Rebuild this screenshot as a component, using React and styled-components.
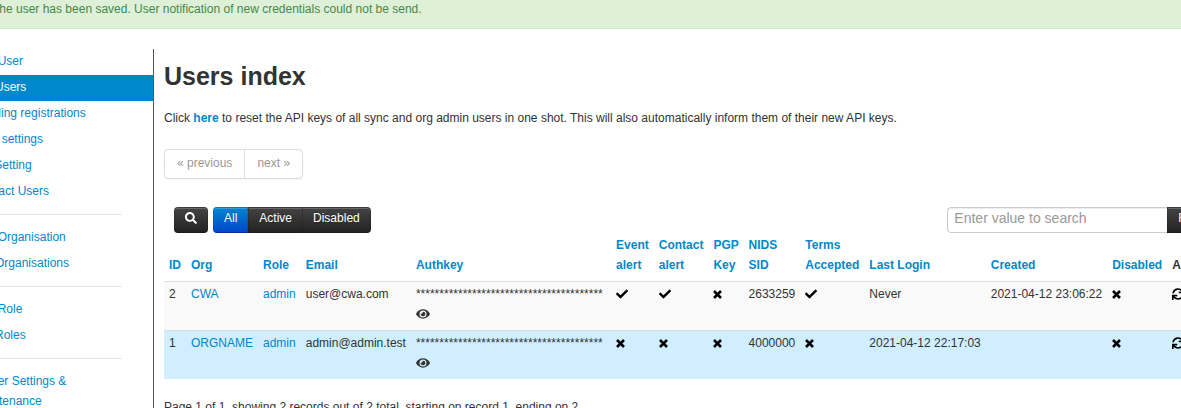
import React from 'react';
import styled, { createGlobalStyle, css } from 'styled-components';
import { FaCheck, FaEye, FaSearch, FaSync } from 'react-icons/fa';

const GlobalStyle = createGlobalStyle`
  *, *::before, *::after { box-sizing: border-box; }
  body {
    margin: 0;
    overflow: hidden;
    background: #fff;
    color: #333;
    font: 12px/20px "Liberation Sans", Arial, sans-serif;
  }
  a { color: #0088cc; text-decoration: none; }
  button, input { font-family: inherit; }
`;

const Shell = styled.div`
  height: 100vh;
  overflow: hidden;
`;

const Page = styled.div`
  margin: 0 -45px 0 -40px;
`;

const Alert = styled.div`
  margin-top: -1px;
  padding: 0 32px 9px;
  border-bottom: 1px solid #d6e9c6;
  background: #dff0d8;
  color: #468847;
`;

const Body = styled.div`
  display: flex;
  padding-top: 20px;
`;

const Sidebar = styled.nav`
  flex: 0 0 193px;
`;

const NavLink = styled.a`
  display: block;
  padding: 2px 13px 4px;
  ${(p) => p.$active && css`
    background: #0088cc;
    color: #fff;
  `}
`;

const NavDivider = styled.hr`
  height: 2px;
  margin: 9px 31px 9px 1px;
  border: 0;
  border-bottom: 1px solid #fff;
  background: #e5e5e5;
`;

const NavLabel = styled.span`
  display: block;
  max-width: 130px;
`;

const Main = styled.main`
  flex: 1;
  min-width: 0;
  padding: 7px 0 40px 10px;
  border-left: 1px solid #555;
`;

const Title = styled.h2`
  margin: 0 0 12px;
  font-size: 25px;
  line-height: 40px;
`;

const Intro = styled.p`
  margin: 0;
`;

const Pager = styled.div`
  display: flex;
  width: max-content;
  margin: 21px 0 28px;
  border: 1px solid #ddd;
  border-radius: 4px;
  box-shadow: 0 1px 2px rgba(0, 0, 0, 0.05);
`;

const PagerItem = styled.span`
  padding: 3px 12px 5px;
  color: #999;
  & + & { border-left: 1px solid #ddd; }
`;

const Toolbar = styled.div`
  display: flex;
  gap: 5px;
  padding: 0 10px;
`;

const Group = styled.div`
  display: flex;
`;

const ToolButton = styled.button`
  height: 26px;
  padding: 0 10px 4px;
  border: 1px solid #222;
  border-color: rgba(0, 0, 0, 0.1) rgba(0, 0, 0, 0.1) rgba(0, 0, 0, 0.25);
  border-radius: 4px;
  background: ${(p) => (p.$active ? 'linear-gradient(#0088cc, #0044cc)' : 'linear-gradient(#444, #222)')} border-box;
  box-shadow: inset 0 1px 0 rgba(255, 255, 255, 0.2);
  color: #fff;
  font-size: 12px;
  line-height: 20px;
  text-shadow: 0 -1px 0 rgba(0, 0, 0, 0.25);
  white-space: nowrap;
  svg { vertical-align: -2px; }
  ${Group} > & { border-radius: 0; }
  ${Group} > & + & { margin-left: -1px; }
  ${Group} > &:first-child { border-radius: 4px 0 0 4px; }
  ${Group} > &:last-child { border-radius: 0 4px 4px 0; }
`;

const Search = styled.form`
  display: flex;
  margin-left: auto;
`;

const SearchInput = styled.input`
  width: 221px;
  height: 26px;
  padding: 0 6px 4px;
  border: 1px solid #ccc;
  border-radius: 4px 0 0 4px;
  box-shadow: inset 0 1px 1px rgba(0, 0, 0, 0.075);
  font-size: 14px;
  &::placeholder { color: #999; opacity: 1; }
`;

const FilterButton = styled(ToolButton)`
  margin-left: -1px;
  border-radius: 0 4px 4px 0;
`;

const Table = styled.table`
  width: 100%;
  margin-bottom: 18px;
  border-collapse: separate;
  border-spacing: 0;
`;

const HeadCell = styled.th`
  width: ${(p) => (p.$fill ? 'auto' : '1px')};
  padding: 2px 5px 6px;
  font-weight: bold;
  text-align: left;
  vertical-align: bottom;
`;

const Row = styled.tr`
  background: ${(p) => (p.$current ? '#cfeeff' : '#f9f9f9')};
`;

const Cell = styled.td`
  padding: 2px 5px 6px;
  border-top: 1px solid #ddd;
  vertical-align: top;
  white-space: nowrap;
`;

const Glyph = styled.span`
  display: flex;
  align-items: center;
  height: 20px;
  color: #000;
`;

const KeyLine = styled.span`
  display: block;
`;

const IconButton = styled.button`
  display: flex;
  align-items: center;
  height: 20px;
  padding: 0;
  border: 0;
  background: none;
  color: ${(p) => (p.$soft ? '#333' : '#000')};
  font-size: 12px;
`;

const NAV = [
  ['Add User', 'List Users', 'Pending registrations', 'User settings', 'Set Setting', 'Contact Users'],
  ['Add Organisation', 'List Organisations'],
  ['Add Role', 'List Roles'],
  ['Server Settings & Maintenance'],
];

const COLUMNS = [
  'ID', 'Org', 'Role', 'Email', 'Authkey', 'Event alert', 'Contact alert',
  'PGP Key', 'NIDS SID', 'Terms Accepted', 'Last Login', 'Created', 'Disabled',
];

const USERS = [
  {
    id: 2, org: 'CWA', role: 'admin', email: 'user@cwa.com', event: true, contact: true, pgp: false,
    sid: '2633259', terms: true, login: 'Never', created: '2021-04-12 23:06:22', disabled: false,
  },
  {
    id: 1, org: 'ORGNAME', role: 'admin', email: 'admin@admin.test', event: false, contact: false, pgp: false,
    sid: '4000000', terms: false, login: '2021-04-12 22:17:03', created: '', disabled: false, current: true,
  },
];

function Cross() {
  return (
    <svg width="9" height="9" viewBox="0 0 9 9" fill="none" stroke="currentColor" strokeWidth="2.6" aria-hidden="true">
      <path d="M1 1l7 7M8 1l-7 7" />
    </svg>
  );
}

function Flag({ on }) {
  return (
    <Glyph role="img" aria-label={on ? 'Yes' : 'No'}>
      {on ? <FaCheck size={12} /> : <Cross />}
    </Glyph>
  );
}

function UserRow({ user }) {
  return (
    <Row $current={user.current}>
      <Cell>{user.id}</Cell>
      <Cell><a href="#org">{user.org}</a></Cell>
      <Cell><a href="#role">{user.role}</a></Cell>
      <Cell>{user.email}</Cell>
      <Cell>
        <KeyLine>{'*'.repeat(40)}&nbsp;</KeyLine>
        <IconButton $soft type="button" aria-label="Reveal authkey"><FaEye size={14} /></IconButton>
      </Cell>
      <Cell><Flag on={user.event} /></Cell>
      <Cell><Flag on={user.contact} /></Cell>
      <Cell><Flag on={user.pgp} /></Cell>
      <Cell>{user.sid}</Cell>
      <Cell><Flag on={user.terms} /></Cell>
      <Cell>{user.login}</Cell>
      <Cell>{user.created}</Cell>
      <Cell><Flag on={user.disabled} /></Cell>
      <Cell>
        <IconButton type="button" aria-label="Reset authkey"><FaSync size={12} /></IconButton>
      </Cell>
    </Row>
  );
}

export default function App() {
  return (
    <Shell>
      <GlobalStyle />
      <Page>
        <Alert role="status">The user has been saved. User notification of new credentials could not be send.</Alert>
        <Body>
          <Sidebar>
            {NAV.map((group, i) => (
              <React.Fragment key={group[0]}>
                {i > 0 && <NavDivider />}
                {group.map((label) => (
                  <NavLink key={label} href="#nav" $active={label === 'List Users'}>
                    <NavLabel>{label}</NavLabel>
                  </NavLink>
                ))}
              </React.Fragment>
            ))}
          </Sidebar>
          <Main>
            <Title>Users index</Title>
            <Intro>
              Click <a href="#reset"><b>here</b></a> to reset the API keys of all sync and org admin users in one shot.
              {' '}This will also automatically inform them of their new API keys.
            </Intro>
            <Pager>
              <PagerItem>« previous</PagerItem>
              <PagerItem>next »</PagerItem>
            </Pager>
            <Toolbar>
              <ToolButton type="button" aria-label="Search"><FaSearch size={12} /></ToolButton>
              <Group>
                <ToolButton type="button" $active>All</ToolButton>
                <ToolButton type="button">Active</ToolButton>
                <ToolButton type="button">Disabled</ToolButton>
              </Group>
              <Search>
                <SearchInput type="text" aria-label="Search users" placeholder="Enter value to search" />
                <FilterButton type="button">Filter</FilterButton>
              </Search>
            </Toolbar>
            <Table>
              <thead>
                <tr>
                  {COLUMNS.map((name) => (
                    <HeadCell key={name}><a href="#sort">{name}</a></HeadCell>
                  ))}
                  <HeadCell $fill>Actions</HeadCell>
                </tr>
              </thead>
              <tbody>
                {USERS.map((user) => <UserRow key={user.id} user={user} />)}
              </tbody>
            </Table>
            <Intro>Page 1 of 1, showing 2 records out of 2 total, starting on record 1, ending on 2</Intro>
          </Main>
        </Body>
      </Page>
    </Shell>
  );
}
